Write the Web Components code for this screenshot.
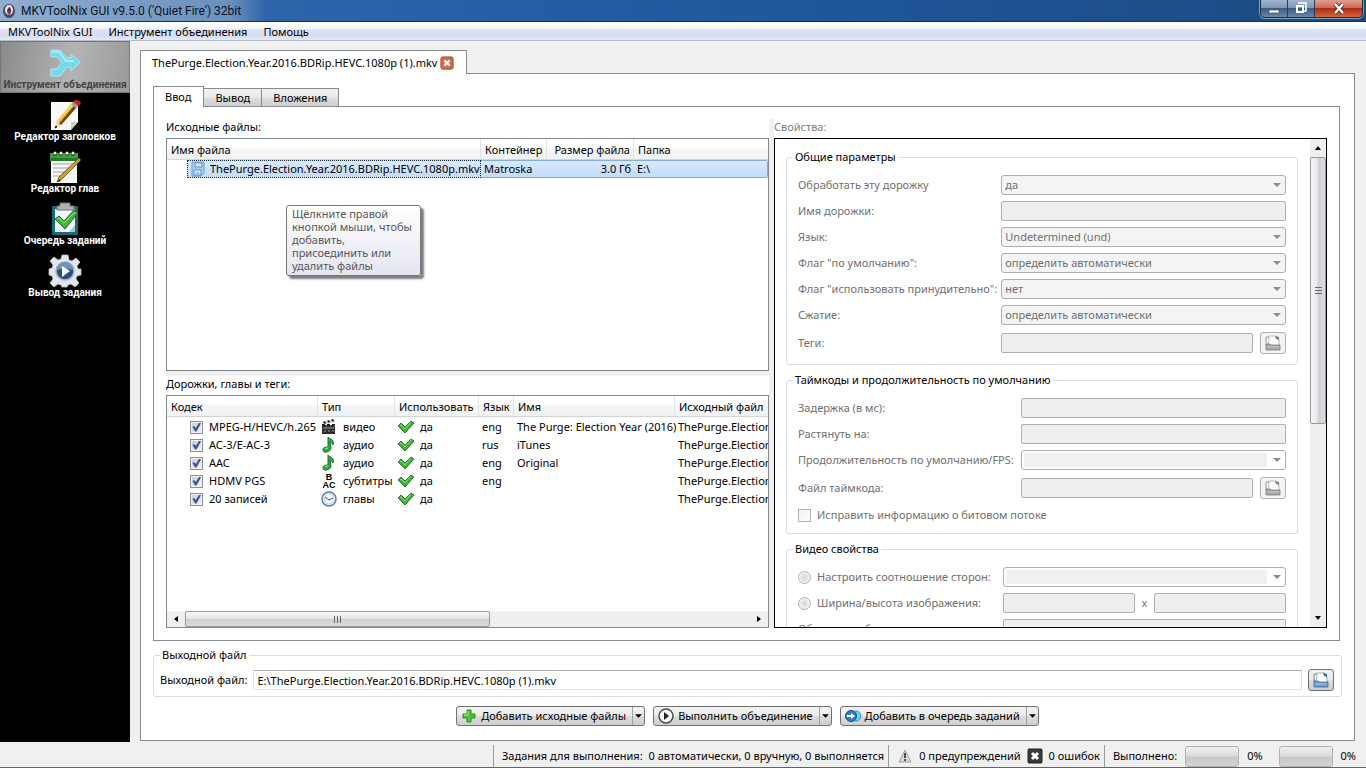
<!DOCTYPE html>
<html lang="ru">
<head>
<meta charset="utf-8">
<title>MKVToolNix GUI</title>
<style>
    html, body {
        height: 100%;
        margin: 0;
    }
    body {
        overflow: hidden;
        background: #f0f0f0;
        color: #000;
        font: 11px/16px "Noto Sans", "Open Sans", sans-serif;
    }
</style>
</head>
<body>
<mkv-window></mkv-window>

<script>
const ICONS = {
    app: `<svg viewBox="0 0 16 16"><ellipse cx="8" cy="8" rx="6" ry="7" fill="#4b4a63"/><ellipse cx="8" cy="7" rx="4" ry="5" fill="#e9e6ee"/><path d="M8 4c3 1 3 6 0 8-3-2-2-6 0-8z" fill="#8c3555"/><circle cx="8" cy="7" r="1.5" fill="#3c2d55"/></svg>`,
    merge: `<svg viewBox="0 0 32 32"><path d="M2 3h9l7 8h4V7l9 8-9 9v-4h-4l-7 9H2v-7h6l5-7-5-5H2z" fill="#74d8ee" stroke="#a9ecf7" stroke-width="1"/><path d="M3 5h7l7 9h8" fill="none" stroke="#b8f2fa" stroke-width="1.500"/></svg>`,
    header: `<svg viewBox="0 0 32 32"><path d="M2 3h27v20l-7 8H2z" fill="#f8f8f6"/><path d="M22 31v-8h7z" fill="#c9c9c5"/><path d="M22 5l5 4L12 26l-6 3 2-7z" fill="#d9a520"/><path d="M22 5l2 2L9 24l-1-2z" fill="#f3d35b"/><path d="M25 7l2 2L12 26l-2-1z" fill="#6a420c"/><path d="M8 22l4 4-6 3z" fill="#ecd6aa"/><path d="M7 27l1 1-2 1z" fill="#222" stroke="#222"/><path d="M22 5l2-2 5 4-2 2z" fill="#999"/><path d="M24 3c2-3 4-2 6-1s3 3-1 5z" fill="#c8281c"/></svg>`,
    chapter: `<svg viewBox="0 0 32 32"><path d="M2 8h26v24H2z" fill="#f6f6f4"/><path d="M1 2h28v8H1z" fill="#3da33a"/><path d="M1 7h28v3H1z" fill="#257a27"/><g fill="#1c5a1e"><circle cx="6" cy="3" r="2"/><circle cx="12" cy="3" r="2"/><circle cx="18" cy="3" r="2"/><circle cx="24" cy="3" r="2"/></g><g fill="#e8f3e6"><circle cx="6" cy="2" r="1.500"/><circle cx="12" cy="2" r="1.500"/><circle cx="18" cy="2" r="1.500"/><circle cx="24" cy="2" r="1.500"/></g><path d="M4 13h21M4 17h20M4 21h16M4 25h12" stroke="#a4a4a4"/><path d="M30 7l2 2-19 19-5 3 2-5z" fill="#caa234" stroke="#5b4514" stroke-width=".8"/><path d="M9 31l1-3 2 2z" fill="#222"/></svg>`,
    queue: `<svg viewBox="0 0 32 32"><rect x="3" y="3" width="26" height="29" rx="1" fill="#156b7c"/><path d="M6 6h20v23H6z" fill="#eef6f7"/><path d="M20 29l6-7v7z" fill="#a9c4ca"/><path d="M11 0h10v3h4v4H8V3h3z" fill="#aeb2b5" stroke="#6f7477"/><path d="M6 16l4-3 5 5 10-11 4 3-13 16z" fill="#45b43c" stroke="#1e6c20"/><path d="M8 16l2-1 5 5L26 9" fill="none" stroke="#97e28a"/></svg>`,
    output: `<svg viewBox="0 0 32 32"><path d="M13 0h6l1 5 3 1 4-3 4 4-3 4 1 3 3 0v6l-4 1-1 3 3 4-4 4-4-3-3 1-1 2h-5l-1-2-3-1-4 3-4-4 3-4-1-3-3-1v-6l3-1 1-3-3-4 4-4 4 3 3-1z" fill="#e4e7ea" stroke="#b9bec4" stroke-width=".8"/><circle cx="16" cy="16" r="9" fill="#294f82" stroke="#aab4c2" stroke-width="1.500"/><path d="M8 15a8 8 0 0 1 16 0q-8-3-16 0z" fill="#6d93c2"/><path d="M13 11l8 5-8 6z" fill="#fff"/></svg>`,
    disk: `<svg viewBox="0 0 16 16"><path d="M2 1h12v11l-3 3H2z" fill="#a9d0f2" stroke="#6a9fd0"/><path d="M5 2h7v4H5z" fill="#cfe6fa" stroke="#5f97cc"/><path d="M4 9h7v5H4z" fill="#d9ecfb" stroke="#5f97cc"/><path d="M6 12h3" stroke="#5b92c8"/></svg>`,
    video: `<svg viewBox="0 0 16 16"><path d="M1 6h13v9H1z" fill="#2c2c2c"/><path d="M1 3l12-3 1 3L2 6z" fill="#d8d8d8"/><path d="M2 3l2 2 1-1-1-2zM6 2l2 2 1-1-1-2zM10 1l2 2 1-1-1-2zM1 5h3v2H1zM6 5h3v2H6zM11 5h3v2h-3z" fill="#1c1c1c"/><path d="M2 9h11M3 12h2M7 12h2M11 12h2M5 7h1M9 7h1M13 7h1" stroke="#9b9b9b"/></svg>`,
    audio: `<svg viewBox="0 0 16 16"><path d="M7 0c1 2 7 2 5 8-1-2-2-3-3-3l1 6c0 4-8 6-8 2 0-3 3-3 5-3z" fill="#2fae45" stroke="#146326" stroke-width=".9"/><path d="M4 12c1-1 3-1 3-1" stroke="#a5eeb0" fill="none"/></svg>`,
    clock: `<svg viewBox="0 0 16 16"><circle cx="8" cy="8" r="7" fill="#e9f1fb" stroke="#5d7fb2" stroke-width="1.500"/><circle cx="8" cy="8" r="5" fill="#f7faff" stroke="#b4c8e4" stroke-width=".7"/><path d="M4 6l4 3 4-2" fill="none" stroke="#3f4f68"/></svg>`,
    tick: `<svg viewBox="0 0 16 16"><path d="M0 7l3-3 4 4 6-6 3 2-9 10z" fill="#43b136" stroke="#1f7320" stroke-width=".9"/><path d="M2 7l1-1 4 4 6-7" fill="none" stroke="#8ddd7f"/></svg>`,
    plus: `<svg viewBox="0 0 16 16"><path d="M6 2h4v4h4v4h-4v4H6v-4H2V6h4z" fill="#55c135" stroke="#2c8a1d"/><path d="M7 3v4H3" fill="none" stroke="#a8ea90"/></svg>`,
    play: `<svg viewBox="0 0 16 16"><circle cx="8" cy="8" r="7" fill="#f5f5f5" stroke="#4c4c4c" stroke-width="1.500"/><path d="M6 4l5 4-5 4z" fill="#222"/></svg>`,
    enqueue: `<svg viewBox="0 0 16 16"><circle cx="11" cy="8" r="5" fill="#66d4ee" stroke="#249bc4"/><circle cx="6" cy="8" r="5.500" fill="#2f7cc0" stroke="#194e8c"/><path d="M2 7h4V5l4 3-4 3V9H2z" fill="#fff"/></svg>`,
    folder: `<svg viewBox="0 0 16 16"><path d="M1 10V2h3" fill="none" stroke="#6d87ab"/><path d="M4 1h7l3 4v6H2c2-3 2-6 2-10z" fill="#fff" stroke="#7d93b0" stroke-width=".7"/><path d="M10 1l4 1v5c0-2-1-3-3-3z" fill="#44638e"/><path d="M1 9h4l1 1h9v5H1z" fill="#6d9ad2" stroke="#3f6699" stroke-width=".8"/><path d="M2 12h12" stroke="#a9c8ec"/></svg>`,
    warning: `<svg viewBox="0 0 16 16"><path d="M8 2l6 12H2z" fill="#dadada" stroke="#a0a0a0" stroke-linejoin="round"/><path d="M7 5h2v5H7zM7 11h2v2H7z" fill="#4d4d4d"/></svg>`,
    error: `<svg viewBox="0 0 16 16"><rect x="1" y="1" width="14" height="14" rx="1" fill="#3a3a3a" stroke="#222"/><path d="M5 5l6 6M11 5l-6 6" stroke="#fff" stroke-width="3"/></svg>`,
    close: `<svg viewBox="0 0 16 16"><rect x="1" y="1" width="14" height="14" rx="2" fill="#d6694b" stroke="#a5432c"/><path d="M5 5l6 6M11 5l-6 6" stroke="#fff" stroke-width="2.500"/></svg>`,
    winmin: `<svg viewBox="0 0 16 16"><rect x="3" y="9" width="10" height="3" fill="#fff" stroke="#3f5470" stroke-width=".7"/></svg>`,
    winmax: `<svg viewBox="0 0 16 16"><path d="M5 2h8v8h-2" fill="none" stroke="#fff" stroke-width="1.500"/><path d="M4 5h6v6H4z" fill="none" stroke="#fff" stroke-width="2"/></svg>`,
    winclose: `<svg viewBox="0 0 16 16"><path d="M4 3l8 9M12 3l-8 9" stroke="#4d1d18" stroke-width="4"/><path d="M4 3l8 9M12 3l-8 9" stroke="#fff" stroke-width="2.500"/></svg>`,
    down: `<svg viewBox="0 0 8 4"><path d="M0 0h8L4 4z" fill="currentColor"/></svg>`
};

class MkvIcon extends HTMLElement {
    constructor() {
        super();
        this.attachShadow({ mode: 'open' });
    }
    connectedCallback() {
        this.shadowRoot.innerHTML = `
            <style>
                :host { display: inline-block; flex: none; width: 16px; height: 16px; }
                svg { display: block; width: 100%; height: 100%; overflow: visible; }
            </style>
            ${ICONS[this.getAttribute('name')] || ''}
        `;
    }
}
customElements.define('mkv-icon', MkvIcon);

class TitleBar extends HTMLElement {
    constructor() {
        super();
        this.attachShadow({ mode: 'open' });
        this.shadowRoot.innerHTML = `
            <style>
                :host {
                    display: flex;
                    justify-content: space-between;
                    height: 22px;
                    box-sizing: border-box;
                    border-bottom: 1px solid #17304f;
                    background:
                        linear-gradient(90deg, rgba(180, 200, 222, .7), rgba(130, 162, 200, .7) 230px, rgba(60, 105, 160, 0) 265px),
                        linear-gradient(90deg, #3d70ab, #2b62a8 25%, #1f579b 60%, #1b4a80);
                }
                .caption {
                    display: flex;
                    align-items: center;
                    gap: 4px;
                    padding-left: 1px;
                    font: 12px/16px Roboto, "Noto Sans", sans-serif;
                    color: #0a1422;
                }
                .buttons {
                    display: flex;
                    height: 18px;
                    box-sizing: border-box;
                    margin-right: 3px;
                    border: 1px solid #1b2c45;
                    border-top: 0;
                    border-radius: 0 0 5px 5px;
                    overflow: hidden;
                    box-shadow: 0 0 0 1px rgba(200, 215, 235, .6);
                }
                button {
                    display: grid;
                    place-items: center;
                    width: 27px;
                    padding: 0;
                    border: 0;
                    border-right: 1px solid #2a3d59;
                    background: linear-gradient(#a3b4cb, #8098b6 45%, #3f5c82 50%, #6b87aa);
                }
                button.close {
                    width: 47px;
                    border: 0;
                    background: linear-gradient(#dfa093, #cd6a55 45%, #b02c14 50%, #d4653d);
                }
            </style>
            <div class="caption"><mkv-icon name="app"></mkv-icon><span><slot></slot></span></div>
            <div class="buttons">
                <button aria-label="Свернуть"><mkv-icon name="winmin"></mkv-icon></button>
                <button aria-label="Развернуть"><mkv-icon name="winmax"></mkv-icon></button>
                <button class="close" aria-label="Закрыть"><mkv-icon name="winclose"></mkv-icon></button>
            </div>
        `;
    }
}
customElements.define('title-bar', TitleBar);

class MenuBar extends HTMLElement {
    constructor() {
        super();
        this.attachShadow({ mode: 'open' });
        this.shadowRoot.innerHTML = `
            <style>
                :host {
                    display: flex;
                    height: 19px;
                    box-sizing: border-box;
                    border-bottom: 1px solid #b3bccf;
                    background: linear-gradient(#fff, #f4f6fb 35%, #dde2f2 45%, #d8def0 80%, #e8ebf6);
                }
                ::slotted(button) {
                    padding: 1px 8px 0;
                    border: 0;
                    background: none;
                    font: inherit;
                    color: inherit;
                }
            </style>
            <slot></slot>
        `;
    }
}
customElements.define('menu-bar', MenuBar);

class ToolButton extends HTMLElement {
    constructor() {
        super();
        this.attachShadow({ mode: 'open' });
    }
    connectedCallback() {
        this.shadowRoot.innerHTML = `
            <style>
                :host { display: block; }
                button {
                    display: flex;
                    flex-direction: column;
                    align-items: center;
                    width: 100%;
                    height: 52px;
                    padding: 6px 0 0;
                    border: 0;
                    background: none;
                    color: #fff;
                    font: bold 10px/12px Roboto, "Noto Sans", sans-serif;
                    white-space: nowrap;
                }
                :host([active]) button {
                    color: #444;
                    background: linear-gradient(100deg, #8a8a8a, #b4b4b4 55%, #9a9a9a);
                    border: 1px solid #777;
                    padding-top: 5px;
                }
                mkv-icon { width: 32px; height: 32px; }
            </style>
            <button><mkv-icon name="${this.getAttribute('icon')}"></mkv-icon><span><slot></slot></span></button>
        `;
    }
}
customElements.define('tool-button', ToolButton);

class ScrollStrip extends HTMLElement {
    constructor() {
        super();
        this.attachShadow({ mode: 'open' });
        this.shadowRoot.innerHTML = `
            <style>
                :host {
                    display: flex;
                    flex: none;
                    height: 16px;
                    background: #efefef;
                }
                :host([vertical]) { flex-direction: column; width: 16px; height: auto; }
                .arrow { display: grid; place-items: center; flex: none; width: 18px; }
                .track { flex: 1; display: flex; min-width: 0; min-height: 0; }
                .thumb {
                    display: flex;
                    align-items: center;
                    justify-content: center;
                    gap: 2px;
                    box-sizing: border-box;
                    width: var(--thumb);
                    border: 1px solid #999;
                    border-radius: 2px;
                    background: linear-gradient(#f5f5f6, #e9e9ec 45%, #cfcfd5 50%, #dcdce0);
                }
                .thumb i { width: 1px; height: 7px; background: #666; }
                svg { width: 6px; height: 6px; }
                :host([vertical]) .track { flex-direction: column; }
                :host([vertical]) .arrow { width: auto; height: 18px; }
                :host([vertical]) svg { transform: rotate(90deg); }
                :host([vertical]) .thumb {
                    flex-direction: column;
                    width: auto;
                    height: var(--thumb);
                    background: linear-gradient(90deg, #f5f5f6, #e9e9ec 45%, #cfcfd5 50%, #dcdce0);
                }
                :host([vertical]) .thumb i { width: 7px; height: 1px; }
            </style>
            <div class="arrow"><svg viewBox="0 0 6 6"><path d="M5 0v6L1 3z"/></svg></div>
            <div class="track"><div class="thumb"><i></i><i></i><i></i></div></div>
            <div class="arrow"><svg viewBox="0 0 6 6"><path d="M1 0v6l4-3z"/></svg></div>
        `;
    }
}
customElements.define('scroll-strip', ScrollStrip);

const TABLE_STYLE = `
    :host {
        display: flex;
        flex-direction: column;
        position: relative;
        box-sizing: border-box;
        min-width: 0;
        min-height: 0;
        border: 1px solid #828790;
        background: #fff;
    }
    .view { flex: 1; min-height: 0; overflow: hidden; }
    table { width: 100%; table-layout: fixed; border-collapse: separate; border-spacing: 0; }
    th, td { padding: 0 0 0 3px; white-space: nowrap; text-align: left; font-weight: normal; }
    th {
        height: 21px;
        padding: 1px 0 0 4px;
        box-sizing: border-box;
        border-bottom: 1px solid #d5d5d5;
        border-right: 1px solid #e2e3e6;
        background: linear-gradient(#fff 40%, #f5f6f8 50%, #f1f2f4);
    }
    th:last-child { border-right: 0; }
    td { height: 18px; line-height: 18px; }
    .end { padding-right: 3px; text-align: right; }
    .cell { display: flex; align-items: center; gap: 6px; height: 18px; }
`;

class FileList extends HTMLElement {
    constructor() {
        super();
        this.attachShadow({ mode: 'open' });
        this.shadowRoot.innerHTML = `
            <style>
                ${TABLE_STYLE}
                tbody td {
                    height: 16px;
                    line-height: 16px;
                    border: solid #84acdd;
                    border-width: 1px 0;
                    background: linear-gradient(#d9e9fc, #c2dcfb);
                }
                tbody td:first-child { padding: 0 0 0 20px; border-width: 0; background: none; }
                td:last-child { border-right-width: 1px; border-radius: 0 2px 2px 0; }
                .cell {
                    gap: 4px;
                    padding-left: 2px;
                    box-sizing: border-box;
                    border: 1px dotted #1a2c44;
                    background: linear-gradient(#d9e9fc, #c2dcfb);
                }
                .tip {
                    position: absolute;
                    left: 119px;
                    top: 66px;
                    width: 135px;
                    box-sizing: border-box;
                    padding: 1px 5px 3px;
                    border: 1px solid #767676;
                    border-radius: 3px;
                    background: linear-gradient(#fff, #e4e5f0);
                    box-shadow: 3px 3px 2px rgba(0, 0, 0, .5);
                    color: #575757;
                    line-height: 13px;
                }
            </style>
            <div class="view">
                <table aria-label="Исходные файлы">
                    <colgroup><col style="width:314px"><col style="width:66px"><col style="width:87px"><col></colgroup>
                    <thead><tr><th>Имя файла</th><th>Контейнер</th><th class="end">Размер файла</th><th>Папка</th></tr></thead>
                    <tbody>
                        <tr>
                            <td><div class="cell"><mkv-icon name="disk"></mkv-icon><span>ThePurge.Election.Year.2016.BDRip.HEVC.1080p.mkv</span></div></td>
                            <td>Matroska</td><td class="end">3.0 Гб</td><td>E:\\</td>
                        </tr>
                    </tbody>
                </table>
            </div>
            <div class="tip" role="tooltip">Щёлкните правой кнопкой мыши, чтобы добавить, присоединить или удалить файлы</div>
        `;
    }
}
customElements.define('file-list', FileList);

const TRACKS = [
    { codec: 'MPEG-H/HEVC/h.265', icon: 'video', type: 'видео', lang: 'eng', name: 'The Purge: Election Year (2016)' },
    { codec: 'AC-3/E-AC-3', icon: 'audio', type: 'аудио', lang: 'rus', name: 'iTunes' },
    { codec: 'AAC', icon: 'audio', type: 'аудио', lang: 'eng', name: 'Original' },
    { codec: 'HDMV PGS', icon: 'abc', type: 'субтитры', lang: 'eng', name: '' },
    { codec: '20 записей', icon: 'clock', type: 'главы', lang: '', name: '' }
];

class TrackList extends HTMLElement {
    constructor() {
        super();
        this.attachShadow({ mode: 'open' });
        const typeIcon = (icon) => icon === 'abc'
            ? '<span class="abc"><b>B</b><b>AC</b></span>'
            : `<mkv-icon name="${icon}"></mkv-icon>`;
        const rows = TRACKS.map(t => `
            <tr>
                <td><label class="cell"><input type="checkbox" checked>${t.codec}</label></td>
                <td><div class="cell">${typeIcon(t.icon)}${t.type}</div></td>
                <td><div class="cell"><mkv-icon name="tick"></mkv-icon>да</div></td>
                <td>${t.lang}</td>
                <td>${t.name}</td>
                <td>ThePurge.Election</td>
            </tr>`).join('');
        this.shadowRoot.innerHTML = `
            <style>
                ${TABLE_STYLE}
                tbody::before { content: ""; display: block; height: 1px; }
                td:first-child { padding-left: 23px; }
                input {
                    appearance: none;
                    position: relative;
                    width: 13px;
                    height: 13px;
                    margin: 0;
                    border: 1px solid #8e8f8f;
                    background: linear-gradient(135deg, #c5cbd8, #f4f5f8);
                    box-shadow: inset 0 0 0 1px #f2f2f2;
                }
                input:checked::before {
                    content: "";
                    position: absolute;
                    inset: 1px;
                    background: #3f5590;
                    clip-path: polygon(5% 50%, 25% 40%, 42% 62%, 80% 0, 100% 8%, 50% 100%, 35% 100%);
                }
                .abc {
                    display: flex;
                    flex-direction: column;
                    align-items: center;
                    width: 16px;
                    font: 9px/8px "Liberation Sans", sans-serif;
                }
                scroll-strip { --thumb: 54%; }
            </style>
            <div class="view">
                <table aria-label="Дорожки, главы и теги">
                    <colgroup><col style="width:151px"><col style="width:77px"><col style="width:84px"><col style="width:35px"><col style="width:161px"><col></colgroup>
                    <thead><tr><th>Кодек</th><th>Тип</th><th>Использовать</th><th>Язык</th><th>Имя</th><th>Исходный файл</th></tr></thead>
                    <tbody>${rows}</tbody>
                </table>
            </div>
            <scroll-strip></scroll-strip>
        `;
    }
}
customElements.define('track-list', TrackList);

class OptionGroup extends HTMLElement {
    constructor() {
        super();
        this.attachShadow({ mode: 'open' });
    }
    connectedCallback() {
        this.shadowRoot.innerHTML = `
            <style>
                :host { display: block; }
                fieldset {
                    min-width: 0;
                    margin: 0;
                    padding: 0 11px 9px;
                    border: 1px solid #d5dfe5;
                    border-radius: 3px;
                }
                legend { height: 16px; margin-left: -5px; padding: 0 2px; }
                .rows {
                    display: grid;
                    grid-template-columns: minmax(var(--label-width, 0px), auto) 1fr;
                    gap: 6px 4px;
                    align-items: center;
                    padding-top: 10px;
                }
            </style>
            <fieldset>
                <legend>${this.getAttribute('caption')}</legend>
                <div class="rows"><slot></slot></div>
            </fieldset>
        `;
    }
}
customElements.define('option-group', OptionGroup);

// kind: select | text | combo | file | check | pair, lead="radio" puts a radio before the label
class OptionRow extends HTMLElement {
    constructor() {
        super();
        this.attachShadow({ mode: 'open' });
    }
    connectedCallback() {
        const label = this.getAttribute('label');
        const kind = this.getAttribute('kind');
        const value = this.getAttribute('value') || '';
        const radio = this.getAttribute('lead') === 'radio';
        const arrow = '<mkv-icon name="down"></mkv-icon>';
        const controls = {
            select: `<span class="drop"><select id="c" disabled><option>${value}</option></select>${arrow}</span>`,
            combo: `<span class="drop combo"><select id="c" disabled aria-label="${label}"></select>${arrow}</span>`,
            text: `<input class="box" id="c" disabled aria-label="${label}">`,
            pair: `<input class="box" id="c" disabled aria-label="Ширина"><span>x</span><input class="box" disabled aria-label="Высота">`,
            file: `<input class="box" id="c" disabled><button disabled aria-label="Обзор"><mkv-icon name="folder"></mkv-icon></button>`
        };
        const body = kind === 'check'
            ? `<label class="wide"><input type="checkbox" disabled>${label}</label>`
            : `${radio
                ? `<label class="lead"><input type="radio" disabled>${label}</label>`
                : `<label for="c">${label}</label>`}
               <div class="field ${kind}">${controls[kind]}</div>`;
        this.shadowRoot.innerHTML = `
            <style>
                :host { display: contents; color: #707070; }
                label { white-space: nowrap; color: #707070; }
                .lead, .wide { display: flex; align-items: center; gap: 6px; }
                .wide { grid-column: 1 / -1; height: 18px; }
                .field { display: flex; align-items: center; gap: 7px; height: 20px; min-width: 0; color: #707070; }
                .field.file { height: 24px; }
                .box, select {
                    flex: 1;
                    box-sizing: border-box;
                    min-width: 0;
                    width: 100%;
                    height: 20px;
                    margin: 0;
                    padding: 0 3px;
                    border: 1px solid #afafaf;
                    border-radius: 2px;
                    background: #efefef;
                    font: inherit;
                    color: inherit;
                }
                select {
                    appearance: none;
                    grid-area: 1 / 1;
                    border-radius: 3px;
                    background: #f4f4f4;
                    opacity: 1;
                }
                .combo select {
                    background: linear-gradient(#f0f0f0, #f0f0f0) 2px 2px / calc(100% - 20px) calc(100% - 4px) no-repeat #fff;
                }
                .drop { display: grid; flex: 1; align-items: center; }
                .drop mkv-icon { grid-area: 1 / 1; justify-self: end; width: 8px; height: 4px; margin-right: 5px; color: #8c8c8c; }
                input[type=checkbox], input[type=radio] {
                    appearance: none;
                    width: 13px;
                    height: 13px;
                    margin: 0;
                    box-sizing: border-box;
                    border: 1px solid #b1b1b1;
                    background: linear-gradient(135deg, #f0f0f0, #fff);
                }
                input[type=radio] { border-radius: 50%; background: radial-gradient(#d6d6d6, #f4f4f4 70%); }
                button {
                    display: grid;
                    place-items: center;
                    width: 26px;
                    height: 22px;
                    padding: 0;
                    border: 1px solid #adb2b5;
                    border-radius: 3px;
                    background: #f4f4f4;
                }
                button mkv-icon { filter: grayscale(1); opacity: .8; }
            </style>
            ${body}
        `;
    }
}
customElements.define('option-row', OptionRow);

class PropertyPane extends HTMLElement {
    constructor() {
        super();
        this.attachShadow({ mode: 'open' });
        this.shadowRoot.innerHTML = `
            <style>
                :host {
                    display: flex;
                    box-sizing: border-box;
                    min-width: 0;
                    min-height: 0;
                    border: 1px solid #000;
                    background: #fff;
                }
                .body {
                    flex: 1;
                    display: flex;
                    flex-direction: column;
                    gap: 7px;
                    min-width: 0;
                    padding: 10px 12px 0 11px;
                    overflow: hidden;
                }
                option-group { flex: none; }
                .timecodes { --label-width: 219px; }
                .video { --label-width: 201px; }
                scroll-strip { --thumb: 59%; }
            </style>
            <div class="body">
                <option-group caption="Общие параметры">
                    <option-row kind="select" label="Обработать эту дорожку" value="да"></option-row>
                    <option-row kind="text" label="Имя дорожки:"></option-row>
                    <option-row kind="select" label="Язык:" value="Undetermined (und)"></option-row>
                    <option-row kind="select" label='Флаг "по умолчанию":' value="определить автоматически"></option-row>
                    <option-row kind="select" label='Флаг "использовать принудительно":' value="нет"></option-row>
                    <option-row kind="select" label="Сжатие:" value="определить автоматически"></option-row>
                    <option-row kind="file" label="Теги:"></option-row>
                </option-group>
                <option-group class="timecodes" caption="Таймкоды и продолжительность по умолчанию">
                    <option-row kind="text" label="Задержка (в мс):"></option-row>
                    <option-row kind="text" label="Растянуть на:"></option-row>
                    <option-row kind="combo" label="Продолжительность по умолчанию/FPS:"></option-row>
                    <option-row kind="file" label="Файл таймкода:"></option-row>
                    <option-row kind="check" label="Исправить информацию о битовом потоке"></option-row>
                </option-group>
                <option-group class="video" caption="Видео свойства">
                    <option-row kind="combo" lead="radio" label="Настроить соотношение сторон:"></option-row>
                    <option-row kind="pair" lead="radio" label="Ширина/высота изображения:"></option-row>
                    <option-row kind="text" label="Обрезка изображения:"></option-row>
                </option-group>
            </div>
            <scroll-strip vertical></scroll-strip>
        `;
    }
}
customElements.define('property-pane', PropertyPane);

class SplitButton extends HTMLElement {
    constructor() {
        super();
        this.attachShadow({ mode: 'open' });
    }
    connectedCallback() {
        this.shadowRoot.innerHTML = `
            <style>
                :host {
                    display: flex;
                    height: 20px;
                    box-sizing: border-box;
                    border: 1px solid #707070;
                    border-radius: 3px;
                    background: linear-gradient(#f2f2f2, #ebebeb 48%, #dcdcdc 52%, #cfcfcf);
                }
                button {
                    display: flex;
                    align-items: center;
                    gap: 4px;
                    padding: 0 6px 0 4px;
                    border: 0;
                    background: none;
                    font: inherit;
                    color: inherit;
                    white-space: nowrap;
                }
                .more { padding: 0 2px; border-left: 1px solid #a0a0a0; }
                .more mkv-icon { width: 7px; height: 4px; }
            </style>
            <button><mkv-icon name="${this.getAttribute('icon')}"></mkv-icon><slot></slot></button>
            <button class="more" aria-label="Ещё"><mkv-icon name="down"></mkv-icon></button>
        `;
    }
}
customElements.define('split-button', SplitButton);

class OutputFile extends HTMLElement {
    constructor() {
        super();
        this.attachShadow({ mode: 'open' });
        this.shadowRoot.innerHTML = `
            <style>
                :host { display: block; }
                fieldset {
                    margin: 0;
                    padding: 0 7px 5px 6px;
                    border: 1px solid #d5dfe5;
                    border-radius: 3px;
                }
                legend { height: 16px; padding: 0 2px; }
                .line { display: flex; align-items: center; gap: 6px; padding-top: 6px; }
                input {
                    flex: 1;
                    height: 20px;
                    box-sizing: border-box;
                    padding: 0 3px;
                    border: 1px solid #e2e3ea;
                    border-top-color: #abadb3;
                    font: inherit;
                }
                button {
                    display: grid;
                    place-items: center;
                    width: 26px;
                    height: 22px;
                    padding: 0;
                    border: 1px solid #707070;
                    border-radius: 3px;
                    background: linear-gradient(#f2f2f2, #ebebeb 48%, #dcdcdc 52%, #cfcfcf);
                }
            </style>
            <fieldset>
                <legend>Выходной файл</legend>
                <div class="line">
                    <label for="out">Выходной файл:</label>
                    <input id="out" value="E:\\ThePurge.Election.Year.2016.BDRip.HEVC.1080p (1).mkv">
                    <button aria-label="Обзор"><mkv-icon name="folder"></mkv-icon></button>
                </div>
            </fieldset>
        `;
    }
}
customElements.define('output-file', OutputFile);

class StatusBar extends HTMLElement {
    constructor() {
        super();
        this.attachShadow({ mode: 'open' });
        this.shadowRoot.innerHTML = `
            <style>
                :host {
                    display: flex;
                    justify-content: flex-end;
                    height: 26px;
                    padding-right: 10px;
                    box-sizing: border-box;
                    border-bottom: 1px solid #4a6787;
                    background: #f0f0f0;
                    white-space: nowrap;
                }
                section {
                    display: flex;
                    align-items: center;
                    gap: 6px;
                    margin-top: 3px;
                    padding: 0 4px 0 8px;
                    border-left: 1px solid #9a9a9a;
                }
                section:last-child { padding-right: 0; gap: 8px; }
                progress {
                    appearance: none;
                    width: 54px;
                    height: 21px;
                    box-sizing: border-box;
                    border: 1px solid #b2b2b2;
                    border-radius: 3px;
                    background: linear-gradient(#f0f0f0, #dcdcdc 45%, #c8c8c8 55%, #d4d4d4);
                }
                progress::-webkit-progress-bar { background: none; }
                progress + span + progress { margin-left: 8px; }
            </style>
            <section><span>Задания для выполнения:</span><span>0 автоматически, 0 вручную, 0 выполняется</span></section>
            <section>
                <mkv-icon name="warning"></mkv-icon><span>0 предупреждений</span>
                <mkv-icon name="error"></mkv-icon><span>0 ошибок</span>
            </section>
            <section>
                <span>Выполнено:</span>
                <progress value="0" max="100" aria-label="Текущее задание"></progress><span>0%</span>
                <progress value="0" max="100" aria-label="Все задания"></progress><span>0%</span>
            </section>
        `;
    }
}
customElements.define('status-bar', StatusBar);

class TabBox extends HTMLElement {
    constructor() {
        super();
        this.attachShadow({ mode: 'open' });
        this.shadowRoot.innerHTML = `
            <style>
                :host { display: flex; flex-direction: column; min-height: 0; }
                .tabs { display: flex; align-items: flex-end; position: relative; z-index: 1; margin-bottom: -1px; }
                .page {
                    flex: 1;
                    display: flex;
                    flex-direction: column;
                    min-height: 0;
                    box-sizing: border-box;
                    border: 1px solid #898c95;
                    padding: var(--page-padding);
                    background: #fff;
                }
                ::slotted(button) {
                    display: flex;
                    align-items: center;
                    gap: 3px;
                    height: 19px;
                    box-sizing: border-box;
                    margin: 0 0 0 -1px;
                    padding: 0 11px;
                    border: 1px solid #898c95;
                    background: linear-gradient(#f2f2f2, #ebebeb 48%, #dddddd 52%, #cfcfcf);
                    font: inherit;
                    color: inherit;
                }
                ::slotted(button[aria-selected=true]) {
                    height: var(--tab-height, 21px);
                    margin: 0;
                    padding: 0 12px 0 11px;
                    border-bottom: 0;
                    background: #fff;
                }
            </style>
            <div class="tabs" role="tablist"><slot name="tab"></slot></div>
            <div class="page"><slot></slot></div>
        `;
    }
}
customElements.define('tab-box', TabBox);

class MkvWindow extends HTMLElement {
    constructor() {
        super();
        this.attachShadow({ mode: 'open' });
        this.shadowRoot.innerHTML = `
            <style>
                :host { display: flex; flex-direction: column; height: 100vh; }
                .middle { flex: 1; display: flex; min-height: 0; }
                nav { flex: none; width: 130px; background: #000; }
                main { flex: 1; display: flex; min-width: 0; padding: 9px 11px 1px 10px; }
                .file { flex: 1; min-width: 0; --page-padding: 12px 12px 14px; --tab-height: 24px; }
                .file > button mkv-icon { width: 14px; height: 14px; }
                .modes { flex: 1; margin-right: 2px; --page-padding: 12px; --tab-height: 21px; }
                .split {
                    flex: 1;
                    display: grid;
                    grid-template-columns: minmax(0, 603fr) 5px minmax(0, 553fr);
                    min-height: 0;
                }
                .lists { display: grid; grid-template-rows: 19px minmax(0, 1fr) 5px 19px minmax(0, 1fr); min-height: 0; }
                .props { display: grid; grid-template-rows: 19px minmax(0, 1fr); min-height: 0; }
                .props > span { color: #808080; }
                .bar { background: #f0f0f0; }
                output-file { margin-top: 6px; }
                .actions { display: flex; justify-content: center; gap: 8px; margin-top: 9px; }
            </style>
            <title-bar>MKVToolNix GUI v9.5.0 ('Quiet Fire') 32bit</title-bar>
            <menu-bar>
                <button>MKVToolNix GUI</button>
                <button>Инструмент объединения</button>
                <button>Помощь</button>
            </menu-bar>
            <div class="middle">
                <nav>
                    <tool-button icon="merge" active>Инструмент объединения</tool-button>
                    <tool-button icon="header">Редактор заголовков</tool-button>
                    <tool-button icon="chapter">Редактор глав</tool-button>
                    <tool-button icon="queue">Очередь заданий</tool-button>
                    <tool-button icon="output">Вывод задания</tool-button>
                </nav>
                <main>
                    <tab-box class="file">
                        <button slot="tab" role="tab" aria-selected="true">ThePurge.Election.Year.2016.BDRip.HEVC.1080p (1).mkv<mkv-icon name="close"></mkv-icon></button>
                        <tab-box class="modes">
                            <button slot="tab" role="tab" aria-selected="true">Ввод</button>
                            <button slot="tab" role="tab">Вывод</button>
                            <button slot="tab" role="tab">Вложения</button>
                            <div class="split">
                                <div class="lists">
                                    <span>Исходные файлы:</span>
                                    <file-list></file-list>
                                    <div class="bar"></div>
                                    <span>Дорожки, главы и теги:</span>
                                    <track-list></track-list>
                                </div>
                                <div class="bar"></div>
                                <div class="props">
                                    <span>Свойства:</span>
                                    <property-pane></property-pane>
                                </div>
                            </div>
                        </tab-box>
                        <output-file></output-file>
                        <div class="actions">
                            <split-button icon="plus">Добавить исходные файлы</split-button>
                            <split-button icon="play">Выполнить объединение</split-button>
                            <split-button icon="enqueue">Добавить в очередь заданий</split-button>
                        </div>
                    </tab-box>
                </main>
            </div>
            <status-bar></status-bar>
        `;
    }
}
customElements.define('mkv-window', MkvWindow);
</script>
</body>
</html>
